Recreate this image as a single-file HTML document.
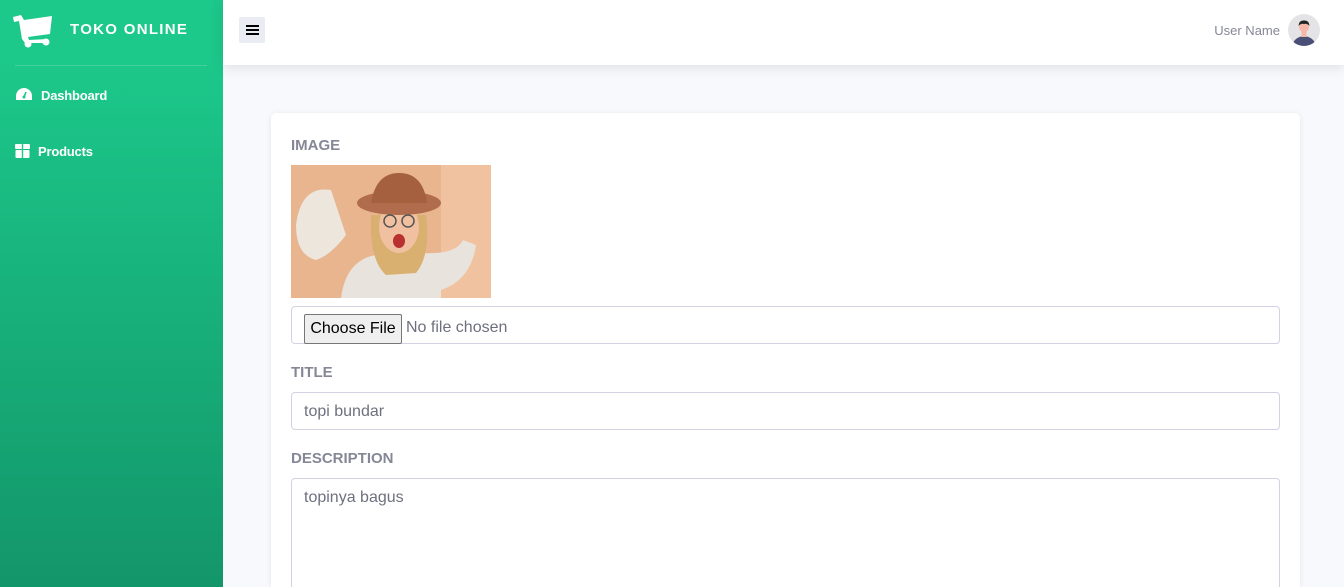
<!DOCTYPE html>
<html style="overflow:hidden;width:1344px;height:587px"><head><style>
*{box-sizing:border-box;margin:0;padding:0}
body{width:1344px;height:587px;overflow:hidden;font-family:"Liberation Sans",sans-serif;background:#f8f9fc;position:relative}
.sb{position:absolute;left:0;top:0;width:223px;height:587px;background:linear-gradient(180deg,#1cc88a 10%,#13966a 100%);color:#fff}
.brand{position:absolute;left:70px;top:21px;font-weight:900;font-size:15px;letter-spacing:1.3px}
.hr{position:absolute;left:15px;right:16px;top:65px;border-top:1px solid rgba(255,255,255,.18)}
.nav{position:absolute;font-weight:700;font-size:13px;letter-spacing:-0.2px}
.top{position:absolute;left:223px;top:0;right:0;height:65px;background:#fff;box-shadow:0 2px 12px rgba(58,59,69,.15)}
.card{position:absolute;left:271px;top:113px;width:1029px;height:474px;background:#fff;border-radius:5px 5px 0 0;box-shadow:0 1px 6px rgba(58,59,69,.1);overflow:hidden}
.lbl{position:absolute;left:20px;font-weight:700;font-size:15px;color:#858796}
.in{position:absolute;left:20px;width:989px;border:1px solid #d1d3e2;border-radius:4px;font-size:16px;color:#6e707e;padding:0 12px}
</style></head><body>
<div class="sb">
<svg style="position:absolute;left:12px;top:12px" width="42" height="36" viewBox="0 0 42 36"><path d="M1 5 L9 3 L12 8 L40 4 L38 22 L16 25 L17 28 L36 27 L36 31 L13 31 L10 27 L7 9 L2 10Z" fill="#fff"/><circle cx="16" cy="32" r="3.5" fill="#fff"/><circle cx="34" cy="30" r="3.5" fill="#fff"/></svg>
<div class="brand">TOKO ONLINE</div>
<div class="hr"></div>
<svg style="position:absolute;left:16px;top:88px" width="16" height="13" viewBox="0 0 16 13"><path d="M8 0A8 8 0 0 0 0 8v4h16V8A8 8 0 0 0 8 0z" fill="#fff"/><path d="M8 9 L10 4" stroke="#1cc88a" stroke-width="1.6"/><circle cx="8" cy="9" r="1.5" fill="#1cc88a"/></svg>
<div class="nav" style="left:41px;top:88px">Dashboard</div>
<svg style="position:absolute;left:15px;top:144px" width="15" height="14" viewBox="0 0 15 14"><rect x="0" y="0" width="15" height="5" rx="1" fill="#fff"/><rect x="0.5" y="6" width="14" height="8" rx="1" fill="#fff"/><rect x="6.8" y="0" width="1.4" height="14" fill="#1cc88a"/></svg>
<div class="nav" style="left:38px;top:144px">Products</div>
</div>
<div class="top">
<div style="position:absolute;left:16px;top:17px;width:26px;height:26px;background:#eaecf4;border-radius:2px"><div style="position:absolute;left:7px;top:8px;width:13px;height:2px;background:#000;box-shadow:0 4px 0 #000,0 8px 0 #000"></div></div>
<div style="position:absolute;right:64px;top:23px;font-size:13px;color:#858796">User Name</div>
<svg style="position:absolute;right:24px;top:14px" width="32" height="32" viewBox="0 0 32 32"><circle cx="16" cy="16" r="16" fill="#e4e4e6"/><clipPath id="c"><circle cx="16" cy="16" r="16"/></clipPath><g clip-path="url(#c)"><path d="M4 32 Q6 23 16 22 Q26 23 28 32Z" fill="#4a4f78"/><rect x="13.5" y="17" width="5" height="6" fill="#f6b6a8"/><circle cx="16" cy="13" r="5" fill="#f6b6a8"/><path d="M10.5 12 Q11 6 16 6.5 Q21 6 21.5 12 Q19 9 16 10 Q13 9 10.5 12Z" fill="#222"/></g></svg>
</div>
<div class="card">
<div class="lbl" style="top:24px">IMAGE</div>
<svg style="position:absolute;left:20px;top:52px" width="200" height="133" viewBox="0 0 200 133"><rect width="200" height="133" fill="#e9b58f"/><rect x="150" y="0" width="50" height="133" fill="#f0c29f"/><path d="M50 133 Q55 95 85 90 L130 88 Q165 90 172 75 L185 80 Q180 115 150 125 L150 133Z" fill="#e8e3dc"/><path d="M5 60 Q10 20 40 25 L55 70 Q40 90 25 95 Q5 90 5 60Z" fill="#ece6dd"/><path d="M80 50 Q78 95 95 110 L125 108 Q140 90 135 50Z" fill="#d9b070"/><ellipse cx="108" cy="62" rx="20" ry="26" fill="#f1c0a0"/><ellipse cx="108" cy="38" rx="42" ry="12" fill="#b06c4c"/><path d="M80 38 Q85 8 108 8 Q132 8 136 38Z" fill="#a5603f"/><ellipse cx="108" cy="76" rx="6" ry="7" fill="#b8302f"/><circle cx="99" cy="56" r="6" fill="none" stroke="#555" stroke-width="1.5"/><circle cx="117" cy="56" r="6" fill="none" stroke="#555" stroke-width="1.5"/></svg>
<div class="in" style="top:193px;height:38px"><span style="position:absolute;left:12px;top:7px;width:98px;height:30px;background:#efefef;border:1px solid #767676;border-radius:2px;color:#000;font-size:16px;line-height:28px;text-align:center">Choose File</span><span style="position:absolute;left:114px;top:12px">No file chosen</span></div>
<div class="lbl" style="top:251px">TITLE</div>
<div class="in" style="top:279px;height:38px;line-height:38px">topi bundar</div>
<div class="lbl" style="top:337px">DESCRIPTION</div>
<div class="in" style="top:365px;height:109px;padding-top:10px;border-bottom:none;border-radius:4px 4px 0 0">topinya bagus</div>
</div>
</body></html>
